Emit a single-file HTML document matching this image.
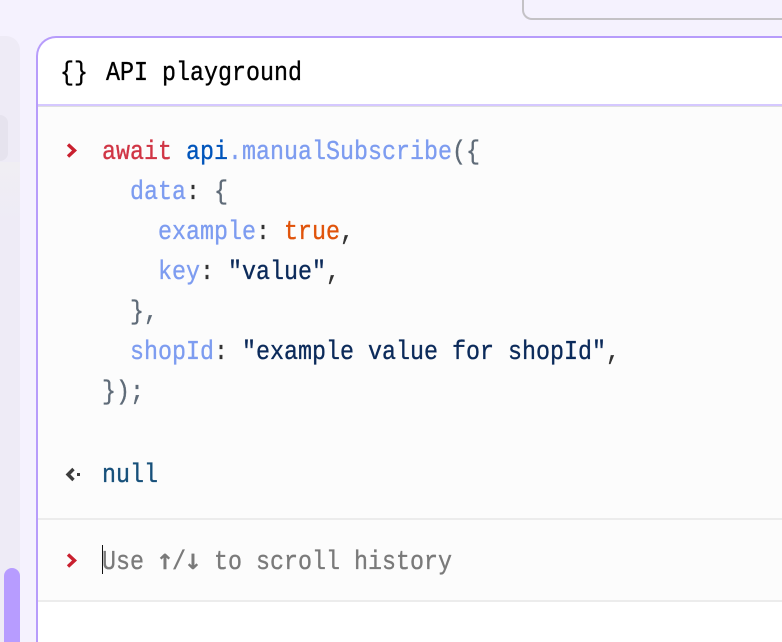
<!DOCTYPE html>
<html><head><meta charset="utf-8">
<style>
html,body{margin:0;padding:0;width:782px;height:642px;overflow:hidden;background:#f5f2fe}
*{box-sizing:border-box}
#w{position:relative;width:782px;height:642px;overflow:hidden;background:#f5f2fe}
.abs{position:absolute}
.ln{position:absolute;left:102px;white-space:pre;font:23.33px/40px "Liberation Mono",monospace;letter-spacing:0;color:#5b6673;transform:scaleY(1.15);transform-origin:50% 50%;-webkit-text-stroke:.3px currentColor}
.r{color:#d03545}.b{color:#0055bb}.l{color:#7d9cf0}.p{color:#5f6b78}.k{color:#333}.o{color:#e0530a}.s{color:#0b2a5a}
.ar{display:inline-block;width:14px;text-align:center;line-height:0;font-family:"DejaVu Sans Mono",monospace;font-size:23.25px;transform:scale(1.25,1.05);-webkit-text-stroke:.5px currentColor}
</style></head><body><div id="w">
<div class="abs" style="left:0;top:36px;width:20px;height:606px;background:#eeebf6;border-top-right-radius:14px"></div>
<div class="abs" style="left:0;top:162px;width:20px;height:60px;background:linear-gradient(#f0eef3,#eeebf6)"></div>
<div class="abs" style="left:0;top:115px;width:8px;height:46px;background:#e6e3ee;border-radius:0 8px 8px 0"></div>
<div class="abs" style="left:4px;top:568px;width:16px;height:74px;background:#b79cff;border-radius:8px 8px 0 0"></div>
<div class="abs" style="left:522px;top:0;width:260px;height:20px;border:2px solid #c4c2c6;border-width:0 0 2px 2px;border-radius:0 0 0 10px"></div>

<div class="abs" style="left:36px;top:36px;width:746px;height:606px;border:2px solid #b79cfb;border-width:2px 0 0 2px;border-radius:20px 0 0 0;background:#fff;overflow:hidden">
  <div class="abs" style="left:0;top:66px;width:100%;height:2px;background:#d5c8ff"></div>
  <div class="abs" style="left:0;top:68px;width:100%;height:414px;background:#fcfcfc;border-top:1px solid #dfdfdf"></div>
  <div class="abs" style="left:0;top:480px;width:100%;height:2px;background:#ececec"></div>
  <div class="abs" style="left:0;top:482px;width:100%;height:80px;background:#fcfcfc"></div>
  <div class="abs" style="left:0;top:562px;width:100%;height:2px;background:#ececec"></div>
</div>

<div class="ln" style="left:60px;top:54px;color:#000">{}</div>
<div class="ln" style="left:106px;top:54px;color:#000">API playground</div>

<svg class="abs" style="left:60px;top:140px" width="24" height="22"><path d="M8 4.5 L14.5 10.5 L8 16.5" fill="none" stroke="#c9202f" stroke-width="3.4"/></svg>
<div class="ln" style="top:133px"><span class="r">await</span> <span class="b">api</span><span class="l">.manualSubscribe</span><span class="p">({</span></div>
<div class="ln" style="top:173px"><span class="l">  data</span><span class="k">:</span> <span class="p">{</span></div>
<div class="ln" style="top:213px"><span class="l">    example</span><span class="k">:</span> <span class="o">true</span><span class="k">,</span></div>
<div class="ln" style="top:253px"><span class="l">    key</span><span class="k">:</span> <span class="s">"value"</span><span class="k">,</span></div>
<div class="ln" style="top:293px"><span class="p">  },</span></div>
<div class="ln" style="top:333px"><span class="l">  shopId</span><span class="k">:</span> <span class="s">"example value for shopId"</span><span class="k">,</span></div>
<div class="ln" style="top:373px"><span class="p">});</span></div>

<svg class="abs" style="left:60px;top:463px" width="24" height="22"><path d="M13.5 6 L8 11.5 L13.5 17" fill="none" stroke="#3d3d3d" stroke-width="3.4"/><rect x="17" y="10" width="3" height="3" fill="#3d3d3d"/></svg>
<div class="ln" style="top:456px;color:#17507a">null</div>

<svg class="abs" style="left:60px;top:550px" width="24" height="22"><path d="M8 4.5 L14.5 10.5 L8 16.5" fill="none" stroke="#c9202f" stroke-width="3.4"/></svg>
<div class="ln" style="top:543px;color:#7a7a7a">Use <span class="ar">↑</span>/<span class="ar">↓</span> to scroll history</div>
<div class="abs" style="left:102px;top:545px;width:1px;height:29px;background:#111"></div>
</div></body></html>
